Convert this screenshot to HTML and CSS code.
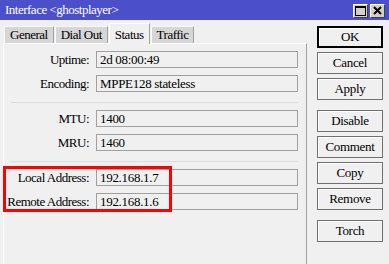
FILE: index.html
```html
<!DOCTYPE html>
<html lang="en">
<head>
<meta charset="UTF-8">
<link rel="stylesheet" href="styles.css">
<title>Interface &lt;ghostplayer&gt;</title>
</head>
<body>
  <div class="window">
    <div class="titlebar">
      <span class="title">Interface &lt;ghostplayer&gt;</span>
      <div class="controls">
        <span class="ctl">
          <svg width="13" height="12" viewBox="0 0 13 12"><rect x="1.5" y="1.5" width="10" height="9" fill="none" stroke="#000" stroke-width="1"/><rect x="1" y="1" width="11" height="2" fill="#000"/></svg>
        </span>
        <span class="ctl">
          <svg width="13" height="12" viewBox="0 0 13 12"><path d="M3 2 L10 9 M10 2 L3 9" stroke="#000" stroke-width="2"/></svg>
        </span>
      </div>
    </div>
    <div class="main">
      <div class="left">
        <div class="tabs">
          <span class="tab">General</span>
          <span class="tab">Dial Out</span>
          <span class="tab active">Status</span>
          <span class="tab">Traffic</span>
        </div>
        <div class="panel">
          <div class="row"><label>Uptime:</label><div class="field">2d 08:00:49</div></div>
          <div class="row"><label>Encoding:</label><div class="field">MPPE128 stateless</div></div>
          <div class="sep"></div>
          <div class="row"><label>MTU:</label><div class="field">1400</div></div>
          <div class="row"><label>MRU:</label><div class="field">1460</div></div>
          <div class="sep"></div>
          <div class="row"><label>Local Address:</label><div class="field">192.168.1.7</div></div>
          <div class="row"><label>Remote Address:</label><div class="field">192.168.1.6</div></div>
          <div class="highlight"></div>
        </div>
      </div>
      <div class="buttons">
        <button class="btn default">OK</button>
        <button class="btn">Cancel</button>
        <button class="btn">Apply</button>
        <button class="btn gap">Disable</button>
        <button class="btn">Comment</button>
        <button class="btn">Copy</button>
        <button class="btn">Remove</button>
        <button class="btn gap">Torch</button>
      </div>
    </div>
  </div>
</body>
</html>
```

FILE: styles.css
```css
html, body {
  margin: 0;
  background-color: #f0f0f0;
}
.window {
  width: 389px;
  height: 264px;
  overflow: hidden;
  font-family: "Liberation Serif", serif;
  font-size: 13px;
  letter-spacing: -0.5px;
  color: #000;
}
.titlebar {
  height: 20px;
  background-color: #4b4fc9;
  display: flex;
  align-items: center;
  justify-content: space-between;
}
.title {
  color: #fff;
  padding-left: 5px;
}
.controls {
  display: flex;
  gap: 2px;
  padding-right: 4px;
  padding-top: 1px;
}
.ctl {
  width: 13px;
  height: 12px;
  background-color: #d4d0c8;
  border: 1px solid;
  border-color: #fff #404040 #404040 #fff;
  display: flex;
}
.main {
  display: flex;
  height: 244px;
}
.left {
  width: 304px;
  margin-left: 3px;
  display: flex;
  flex-direction: column;
}
.tabs {
  height: 23px;
  display: flex;
  align-items: flex-end;
  padding-left: 1px;
}
.tab {
  height: 16px;
  line-height: 16px;
  padding: 0 5px;
  background-color: #d6d6d6;
  border: 1px solid #f8f8f8;
  border-bottom: none;
  border-right-color: #a0a0a0;
  margin-right: 1px;
}
.tab.active {
  height: 20px;
  line-height: 22px;
  background-color: #f0f0f0;
  border-color: #fff;
  border-right-color: #a0a0a0;
  margin-bottom: -1px;
  position: relative;
  z-index: 1;
}
.panel {
  flex: 1;
  position: relative;
  border-top: 1px solid #fff;
  border-left: 1px solid #fff;
  border-right: 1px solid #a0a0a0;
  padding: 7px 8px 0 0;
  display: flex;
  flex-direction: column;
  gap: 7px;
}
.row {
  display: flex;
  align-items: center;
}
.row label {
  width: 85px;
  text-align: right;
  margin-right: 7px;
  white-space: nowrap;
}
.field {
  flex: 1;
  height: 15px;
  line-height: 15px;
  border: 1px solid #a0a0a0;
  padding-left: 3px;
  letter-spacing: -0.3px;
}
.sep {
  height: 1px;
  background-color: #dcdcdc;
  margin: 3px 0 0 7px;
}
.highlight {
  position: absolute;
  left: -1px;
  top: 122px;
  width: 163px;
  height: 40px;
  border: 3px solid #f00;
}
.buttons {
  width: 66px;
  margin-left: 10px;
  padding-top: 6px;
  display: flex;
  flex-direction: column;
  gap: 4px;
}
.btn {
  height: 22px;
  font-family: "Liberation Serif", serif;
  font-size: 13px;
  letter-spacing: -0.3px;
  background-color: #f0f0f0;
  border: 1px solid #6f6f6f;
  box-shadow: inset 1px 1px 0 #fff;
  padding: 0;
  color: #000;
}
.btn.default {
  border: 2px solid #000;
}
.btn.gap {
  margin-top: 6px;
}
```
